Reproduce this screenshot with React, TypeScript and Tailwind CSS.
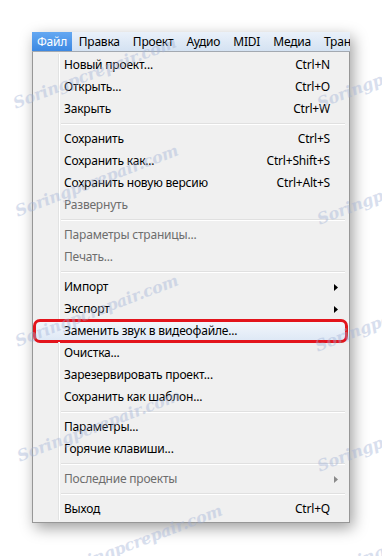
import React from 'react';

type Row =
  | { kind: 'item'; label: string; shortcut?: string; disabled?: boolean; sub?: boolean; marked?: boolean }
  | { kind: 'sep' };

const rows: Row[] = [
  { kind: 'item', label: 'Новый проект...', shortcut: 'Ctrl+N' },
  { kind: 'item', label: 'Открыть...', shortcut: 'Ctrl+O' },
  { kind: 'item', label: 'Закрыть', shortcut: 'Ctrl+W' },
  { kind: 'sep' },
  { kind: 'item', label: 'Сохранить', shortcut: 'Ctrl+S' },
  { kind: 'item', label: 'Сохранить как...', shortcut: 'Ctrl+Shift+S' },
  { kind: 'item', label: 'Сохранить новую версию', shortcut: 'Ctrl+Alt+S' },
  { kind: 'item', label: 'Развернуть', disabled: true },
  { kind: 'sep' },
  { kind: 'item', label: 'Параметры страницы...', disabled: true },
  { kind: 'item', label: 'Печать...', disabled: true },
  { kind: 'sep' },
  { kind: 'item', label: 'Импорт', sub: true },
  { kind: 'item', label: 'Экспорт', sub: true },
  { kind: 'item', label: 'Заменить звук в видеофайле...', marked: true },
  { kind: 'item', label: 'Очистка...' },
  { kind: 'item', label: 'Зарезервировать проект...' },
  { kind: 'item', label: 'Сохранить как шаблон...' },
  { kind: 'sep' },
  { kind: 'item', label: 'Параметры...' },
  { kind: 'item', label: 'Горячие клавиши...' },
  { kind: 'sep' },
  { kind: 'item', label: 'Последние проекты', disabled: true, sub: true },
  { kind: 'sep' },
  { kind: 'item', label: 'Выход', shortcut: 'Ctrl+Q' },
];

const menus = ['Правка', 'Проект', 'Аудио', 'MIDI', 'Медиа', 'Тран'];

const Arrow = ({ gray }: { gray?: boolean }) => (
  <svg width="4" height="7" viewBox="0 0 4 7" className="block">
    <path d="M0 0 L4 3.5 L0 7 Z" fill={gray ? '#8a8a8a' : '#000'} />
  </svg>
);

// faint diagonal site watermark lying over the screenshot
const Watermark = ({ className }: { className: string }) => (
  <span
    className={`absolute pointer-events-none whitespace-nowrap italic font-bold text-[16px] text-[#9fb0d6] opacity-40 origin-left -rotate-[21deg] font-['DejaVu_Serif',serif] ${className}`}
  >
    Soringpcrepair.com
  </span>
);

export default function App() {
  return (
    <div className="relative w-[382px] h-[556px] overflow-hidden bg-white font-['Noto_Sans',sans-serif] text-[12px] tracking-[-0.2px] text-black">
      <div className="pt-[32px] pl-[32px]">
        <div className="w-[318px] shadow-[3px_5px_14px_rgba(0,0,0,0.38)]">
          {/* menu bar */}
          <div className="flex h-[20px] items-stretch bg-gradient-to-b from-[#eaf1fa] to-[#d4e2f2] border-b border-[#a3a9b1] leading-[20px] overflow-hidden">
            <div className="px-[5px] bg-gradient-to-b from-[#64a8f2] to-[#3c88e2] text-white">Файл</div>
            {menus.map((m) => (
              <div key={m} className="px-[6.5px] whitespace-nowrap">
                {m}
              </div>
            ))}
          </div>
          {/* dropdown */}
          <div className="bg-[#f0f0f0] border-x border-b border-[#979797] py-[2px]">
            {rows.map((r, i) =>
              r.kind === 'sep' ? (
                <div key={i} className="flex h-[8px]">
                  <div className="w-[26px] border-r border-[#e2e3e3] shadow-[1px_0_0_#fff]" />
                  <div className="flex-1 flex items-center pl-[2px] pr-[4px]">
                    <div className="h-[2px] w-full border-t border-[#e0e0e0] border-b border-b-white" />
                  </div>
                </div>
              ) : (
                <div
                  key={i}
                  className={`relative flex h-[22px] leading-[22px] ${
                    r.marked ? 'bg-gradient-to-b from-[#f5f8fc] to-[#dce7f5]' : ''
                  } ${r.disabled ? 'text-[#6d6d6d]' : ''}`}
                >
                  <div
                    className={`w-[26px] ${r.marked ? '' : 'border-r border-[#e2e3e3] shadow-[1px_0_0_#fff]'}`}
                  />
                  <div className="flex-1 flex items-center pl-[5px] whitespace-nowrap">{r.label}</div>
                  {r.shortcut && <div className="pr-[19px] whitespace-nowrap">{r.shortcut}</div>}
                  {r.sub && (
                    <div className="pr-[11px] flex items-center">
                      <Arrow gray={r.disabled} />
                    </div>
                  )}
                  {r.marked && (
                    <div className="absolute -top-[1px] -bottom-[1px] left-0 right-[1px] rounded-[7px] border-[3px] border-[#e3141c]" />
                  )}
                </div>
              )
            )}
          </div>
        </div>
      </div>

      <Watermark className="left-[14px] top-[92px]" />
      <Watermark className="left-[16px] top-[200px]" />
      <Watermark className="left-[16px] top-[330px]" />
      <Watermark className="left-[18px] top-[445px]" />
      <Watermark className="left-[60px] top-[560px]" />
      <Watermark className="left-[318px] top-[92px]" />
      <Watermark className="left-[318px] top-[208px]" />
      <Watermark className="left-[316px] top-[335px]" />
      <Watermark className="left-[318px] top-[455px]" />
      <Watermark className="left-[330px] top-[560px]" />
    </div>
  );
}
